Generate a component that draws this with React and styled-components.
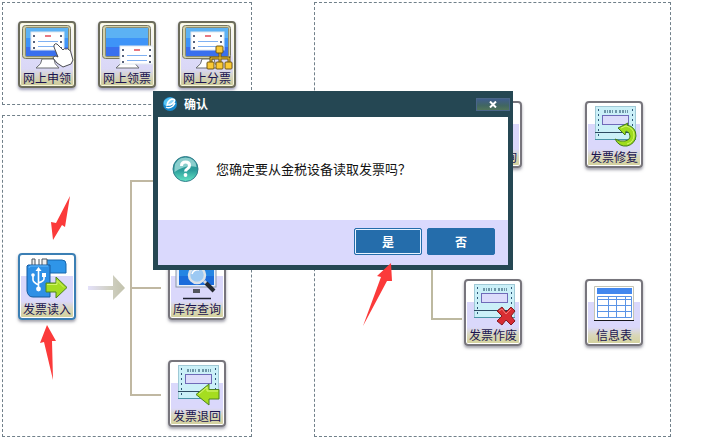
import * as React from 'react'
import styled, { createGlobalStyle, css } from 'styled-components'

const GlobalStyle = createGlobalStyle`
  * {
    box-sizing: border-box;
  }

  body {
    margin: 0;
    background-color: #fff;
    font-family: 'Noto Sans CJK SC', 'Noto Sans', sans-serif;
    font-size: 12px;
  }
`

const Page = styled.main`
  position: relative;
  display: grid;
  grid-template-columns: 249fr 358fr;
  column-gap: 62px;
  padding: 2px 36px 0 2px;
`

const Column = styled.div`
  display: flex;
  flex-direction: column;
  gap: 10px;
`

const Panel = styled.section`
  position: relative;
  border: 1px dashed #71808a;
`

const TileRow = styled(Panel)`
  display: flex;
  gap: 22px;
  padding: 18px 15px 16px;
`

const Diagram = styled(Panel)`
  flex: 1;
  min-height: 322px;
`

const Lines = styled.svg`
  position: absolute;
  top: 0;
  left: 0;
  overflow: visible;
`

const plainTile = css`
  border: 2px solid #77757c;
  background: linear-gradient(#fff 21px, #dad8fb 21px, #dad8fb 46px, #d9d7bb 54px, #d3d19b);
  box-shadow: inset 0 0 0 1px #fff, 0 2px 3px rgba(70, 70, 90, .5);
`

const webTile = css`
  border: 2px solid #6c6c5c;
  background: linear-gradient(#fafaf4, #eceaf6 30px, #dcdaf8 36px, #dad8f6 46px, #d3d1b4 56px, #cdcb96);
  box-shadow: inset 0 0 0 1px #f8f8dc, 0 2px 3px rgba(70, 70, 120, .5);
`

const TileButton = styled.button`
  display: flex;
  flex-direction: column;
  align-items: center;
  flex: none;
  width: 58px;
  height: 67px;
  padding: 0;
  border-radius: 4px;
  color: #1b1450;
  font: inherit;
  cursor: pointer;
  ${props => (props.$web ? webTile : plainTile)}
  ${props => props.$selected && 'border-color: #3b7fb4;'}

  svg {
    display: block;
    overflow: visible;
  }

  span {
    line-height: ${props => (props.$web ? 18 : 16)}px;
    white-space: nowrap;
  }
`

const Node = styled.div`
  position: absolute;
  left: ${props => props.$x}px;
  top: ${props => props.$y}px;
`

const Dialog = styled.div`
  position: absolute;
  top: 91px;
  left: 153px;
  width: 360px;
  padding: 0 5px 5px;
  background-color: #254753;
`

const TitleBar = styled.header`
  display: flex;
  align-items: center;
  height: 26px;
  padding-left: 4px;
  color: #fff;

  h1 {
    flex: 1;
    margin: 0 0 0 6px;
    font-size: 12px;
    line-height: 16px;
  }
`

const CloseButton = styled.button`
  display: flex;
  align-items: center;
  justify-content: center;
  width: 34px;
  height: 13px;
  margin-right: -2px;
  padding: 0;
  border: 1px solid #4a6588;
  background: linear-gradient(#3f5d8c, #416661 60%, #50745a);
  color: #fff;
`

const Message = styled.div`
  display: flex;
  align-items: center;
  gap: 17px;
  height: 103px;
  padding-left: 14px;
  background-color: #fff;
  color: #111;

  p {
    margin: 0;
    font-size: 13px;
    line-height: 18px;
  }
`

const Footer = styled.footer`
  display: flex;
  justify-content: flex-end;
  gap: 5px;
  padding: 8px 13px 10px;
  background-color: #dad9fd;
`

const ActionButton = styled.button`
  width: 68px;
  height: 27px;
  padding: 0;
  border: 1px solid #256dab;
  border-radius: 2px;
  background-color: #256dab;
  box-shadow: ${props => (props.$primary ? 'inset 0 0 0 1px #e8f3ff' : 'none')};
  color: #fff;
  font: inherit;
  font-weight: bold;
  cursor: pointer;
`

const Monitor = ({ children }) => (
  <g>
    <path d='M24 38h12q0 5 5 9H18q6-4 6-9z' fill='#fff' stroke='#6a6d70' />
    <rect x='4.500' y='4.500' width='48' height='33' rx='3' fill='#d3d1aa' stroke='#77775e' />
    <rect x='7.500' y='6.500' width='43' height='29' rx='1' fill='#5cb2f4' stroke='#8b8d72' />
    <path d='M8 17h42v9H8z' fill='#3e94f8' />
    <path d='M8 26h42v9H8z' fill='#3a70ee' />
    {children}
  </g>
)

const Slip = ({ x, y }) => (
  <g transform={`translate(${x} ${y})`}>
    <rect width='33' height='18' fill='#fff' stroke='#dfe7f0' />
    <path d='M3 3v14M30 3v14' stroke='#56617a' strokeWidth='2' strokeDasharray='2 4' />
    <path d='M14 4h6' stroke='#e87880' strokeWidth='2' />
    <path d='M7 9.500h20M7 14.500h20' stroke='#7fb0f2' />
  </g>
)

const Bill = ({ children }) => (
  <g>
    <rect x='10.500' y='5.500' width='40' height='33' fill='#cbf0f8' stroke='#9fc9d6' />
    <path d='M13.500 8v28M47.500 8v28' stroke='#2f5678' strokeDasharray='2 3' />
    <path d='M19 10.500h24' stroke='#6f97a8' strokeWidth='3' strokeDasharray='2 1 1 1 2 1 1 2 2 2 2 1' />
    <rect x='17.500' y='14.500' width='26' height='9' fill='#dcdcfb' stroke='#6f6bb8' />
    <path d='M10 31.500h41' stroke='#2d4a62' />
    <path d='M10 38.500h41' stroke='#4b93a7' />
    {children}
  </g>
)

const icons = {
  apply: (
    <Monitor>
      <Slip x={13} y={11} />
      <path
        d='M36 24q1-2 3-1l6 6q1-2 3-1 2-1 3 1 2 0 2 3l2 7-2 4-8 3-6-4-4-5q0-2 3-2l2 1-4-10z'
        fill='#fff' stroke='#4b4c52'
      />
    </Monitor>
  ),
  receive: <Monitor><Slip x={22} y={25} /></Monitor>,
  split: (
    <Monitor>
      <Slip x={13} y={11} />
      <path d='M42 32v9M33 41v-4h18v4' fill='none' stroke='#6a5312' strokeWidth='3' />
      <path d='M42 32v9M33 41v-4h18v4' fill='none' stroke='#f4c62e' />
      {[[38, 25], [29, 41], [38, 41], [47, 41]].map(([x, y]) => (
        <rect key={`${x}-${y}`} x={x} y={y} width='7' height='7' rx='1' fill='#fbc934' stroke='#6f5714' />
      ))}
    </Monitor>
  ),
  read: (
    <g>
      <path d='M26 7h18q4 0 4 4v9H26z' fill='#2f95e8' stroke='#1767ad' />
      <path d='M14 12V6h3v6M21 12V6M24 12V6h5v6' fill='#eee' stroke='#4c555d' />
      <path d='M10 12h22v32H15q-5 0-6-6V13z' fill='#2e90e6' stroke='#165b9e' />
      <path d='M11 15q0-2 2-2h17' fill='none' stroke='#65bcff' />
      <path d='M20.500 17v19M15 22v5q0 2 5.500 5M26 22v4q0 2-5.500 4' fill='none' stroke='#fff' strokeWidth='1.600' />
      <path d='M20.500 14l3 4h-6z' fill='#fff' />
      <circle cx='20.500' cy='36' r='2.400' fill='#fff' />
      <circle cx='15' cy='22' r='1.800' fill='#fff' />
      <path d='M24 20h4v4h-4z' fill='#fff' />
      <path d='M28 30h10v-6l11 10.500L38 45v-6H28z' fill='#a4dd22' stroke='#4c841e' />
      <path d='M29 31.500h10v-4l7 7' fill='none' stroke='#d3f56b' />
    </g>
  ),
  stock: (
    <g>
      <rect x='8' y='5' width='40' height='29' fill='#e5eefb' stroke='#8a93a8' />
      <rect x='11' y='8' width='35' height='24' fill='#2585e3' />
      <path d='M11 23h35v9H11z' fill='#1b6cdb' />
      <path d='M25 36h7v4h-7z' fill='#53565d' />
      <path d='M15 45.500h28' stroke='#1f2330' strokeWidth='1.500' />
      <circle cx='29' cy='22' r='8' fill='#9cc9f3' stroke='#dbe2e8' strokeWidth='2.500' />
      <path d='M24 21q2-5 7-4' fill='none' stroke='#fff' strokeWidth='1.500' />
      <path d='M36 28l3 3' stroke='#d4d9de' strokeWidth='3' />
      <path d='M38 30l8 8' stroke='#252a32' strokeWidth='4' />
    </g>
  ),
  giveBack: (
    <Bill>
      <path d='M28 34.500L41 24v5.500h10V39H41v6z' fill='#a5dd20' stroke='#4c8221' />
      <path d='M31 34l8-7v4h11' fill='none' stroke='#d8f87a' />
    </Bill>
  ),
  repair: (
    <Bill>
      <path
        d='M30 38q4 8 12 7 8-2 9-10 0-9-9-11l1-2-10 5 7 7 1-4q4 1 4 5t-5 5q-5 1-10-2z'
        fill='#9edb1e' stroke='#437b1c'
      />
      <path d='M36 27l5-2q8 2 8 9 0 7-7 9' fill='none' stroke='#d6f66c' />
    </Bill>
  ),
  discard: (
    <Bill>
      <path
        d='M38 28l4 5 5-5 4 4-4 5 4 5-4 4-5-5-4 5-5-4 5-5-5-5z'
        fill='#d82d32' stroke='#831a20' strokeLinejoin='round'
      />
      <path d='M35 32l3-2 4 5 5-5' fill='none' stroke='#f1807b' />
    </Bill>
  ),
  table: (
    <g>
      <path d='M9.500 41V7.500h39V41' fill='#fff' stroke='#c4c4b4' />
      <path d='M12 9h35v6H12z' fill='#4287ee' />
      <path
        d='M12.500 17.500h34v21h-34zM12.500 20.500h34M12.500 26.500h34M12.500 32.500h34M23.500 17v21M31.500 17v21M40.500 17v21'
        fill='#fff' stroke='#5b94e6'
      />
      <path d='M9 41.500h40' stroke='#17171c' />
    </g>
  ),
}

const Tile = ({ icon, label, web, selected }) => (
  <TileButton type='button' $web={web} $selected={selected}>
    <svg width='54' height='46' viewBox='2 2 54 46' aria-hidden='true'>{icons[icon]}</svg>
    <span>{label}</span>
  </TileButton>
)

const readNodes = [
  { x: 15, y: 137, icon: 'read', label: '发票读入', selected: true },
  { x: 165, y: 137, icon: 'stock', label: '库存查询' },
  { x: 165, y: 244, icon: 'giveBack', label: '发票退回' },
]

const invoiceNodes = [
  { x: 149, y: 98, icon: 'stock', label: '发票查询' },
  { x: 270, y: 98, icon: 'repair', label: '发票修复' },
  { x: 149, y: 276, icon: 'discard', label: '发票作废' },
  { x: 270, y: 276, icon: 'table', label: '信息表' },
]

const Nodes = ({ items }) => items.map(({ x, y, ...tile }) => (
  <Node key={tile.label} $x={x} $y={y}><Tile {...tile} /></Node>
))

const Logo = () => (
  <svg width='16' height='16' viewBox='0 0 16 16' aria-hidden='true'>
    <circle cx='8' cy='8' r='7' fill='#1689cf' />
    <path d='M2 5q4-5 9-3l-7 8q-3-1-2-5z' fill='#56c4f3' />
    <path d='M5 10q0-5 5-7 4 0 2 3-2 3-6 3' fill='#8fd6f8' stroke='#fff' strokeWidth='1.600' />
    <path d='M4 11q3 2 7-1l2-3' fill='none' stroke='#fff' strokeWidth='1.500' />
  </svg>
)

const HelpIcon = () => (
  <svg width='27' height='28' viewBox='0 0 27 28' aria-hidden='true'>
    <defs>
      <linearGradient id='help' x2='0' y2='1'>
        <stop offset='0' stopColor='#268f92' />
        <stop offset='.55' stopColor='#2c9d9b' />
        <stop offset='1' stopColor='#64e5c5' />
      </linearGradient>
    </defs>
    <circle cx='13.500' cy='14' r='12.500' fill='url(#help)' stroke='#327d8c' />
    <path d='M2.500 13Q3 3 13.500 2.500 24 3 24.500 12 14 9 2.500 17z' fill='#b4e6e4' opacity='.7' />
    <path d='M9.500 11q0-4 4-4t4 3.500q0 2-2 3.200t-2 2.800' fill='none' stroke='#fff' strokeWidth='3' />
    <circle cx='13.500' cy='20' r='1.900' fill='#fff' />
  </svg>
)

export default () => (
  <>
    <GlobalStyle />
    <Page>
      <Column>
        <TileRow>
          <Tile web icon='apply' label='网上申领' />
          <Tile web icon='receive' label='网上领票' />
          <Tile web icon='split' label='网上分票' />
        </TileRow>
        <Diagram>
          <Lines width='247' height='320' aria-hidden='true'>
            <defs>
              <linearGradient id='flow'>
                <stop offset='0' stopColor='#e4e1fa' />
                <stop offset='.6' stopColor='#d0d0c2' />
                <stop offset='1' stopColor='#c2c2ac' />
              </linearGradient>
            </defs>
            <path d='M158 65H128V279H158M128 172H158' fill='none' stroke='#c0b8a2' strokeWidth='2' />
            <path d='M85 170h25v-11l12 13-12 12v-10H85z' fill='url(#flow)' />
          </Lines>
          <Nodes items={readNodes} />
        </Diagram>
      </Column>
      <Diagram>
        <Lines width='355' height='433' aria-hidden='true'>
          <path d='M148 131H117V316H147' fill='none' stroke='#bdb9a0' strokeWidth='2' />
        </Lines>
        <Nodes items={invoiceNodes} />
      </Diagram>

      <Dialog role='dialog' aria-labelledby='dialog-title'>
        <TitleBar>
          <Logo />
          <h1 id='dialog-title'>确认</h1>
          <CloseButton type='button' aria-label='关闭'>
            <svg width='8' height='7' viewBox='0 0 8 7'>
              <path d='M1 .5l6 6M7 .5l-6 6' stroke='currentColor' strokeWidth='2' />
            </svg>
          </CloseButton>
        </TitleBar>
        <Message>
          <HelpIcon />
          <p>您确定要从金税设备读取发票吗？</p>
        </Message>
        <Footer>
          <ActionButton type='button' $primary>是</ActionButton>
          <ActionButton type='button'>否</ActionButton>
        </Footer>
      </Dialog>

      {/* red pointers, drawn over everything */}
      <Lines width='400' height='400' fill='#fb3a3a' pointerEvents='none' aria-hidden='true'>
        <path d='M70 196L65 227 62 225 53 240 51 222 56 223z' />
        <path d='M53 380L44 342 40 343 47 325 56 341 52 341z' />
        <path d='M363 326L381 277 377 276 391 263 392 281 387 281z' />
      </Lines>
    </Page>
  </>
)
